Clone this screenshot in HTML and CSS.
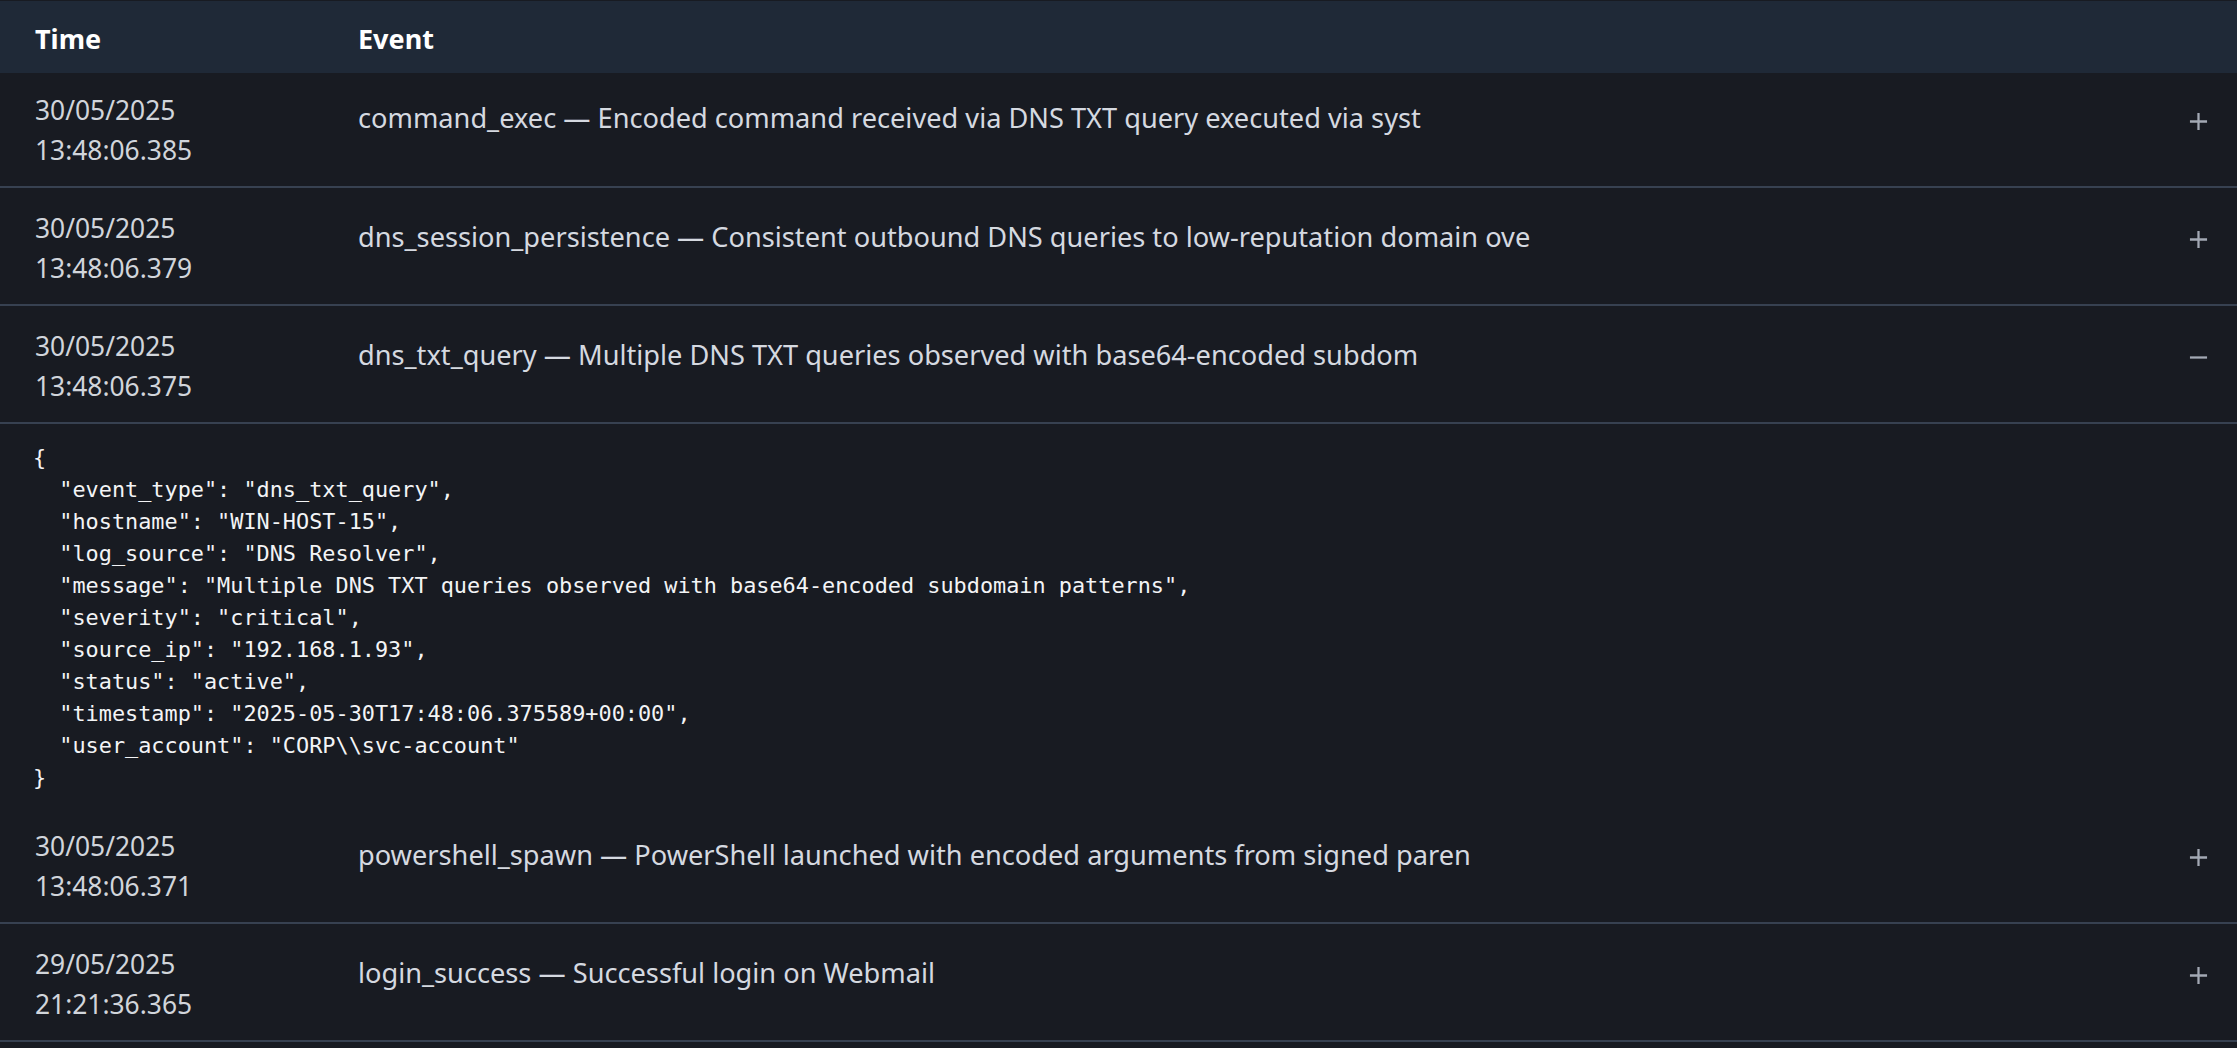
FILE: index.html
```html
<!DOCTYPE html>
<html lang="en">
<head>
<meta charset="utf-8">
<title>Events</title>
<link rel="stylesheet" href="styles.css">
</head>
<body>
<div class="log-table">
  <div class="log-head">
    <div class="col-time">Time</div>
    <div class="col-event">Event</div>
    <div class="col-toggle"></div>
  </div>

  <div class="log-row first">
    <div class="col-time"><span class="date">30/05/2025</span><span class="clock">13:48:06.385</span></div>
    <div class="col-event">command_exec — Encoded command received via DNS TXT query executed via syst</div>
    <div class="col-toggle"><svg class="toggle" viewBox="0 0 20 20"><path d="M10 1v18M1 10h18"/></svg></div>
  </div>

  <div class="log-row">
    <div class="col-time"><span class="date">30/05/2025</span><span class="clock">13:48:06.379</span></div>
    <div class="col-event">dns_session_persistence — Consistent outbound DNS queries to low-reputation domain ove</div>
    <div class="col-toggle"><svg class="toggle" viewBox="0 0 20 20"><path d="M10 1v18M1 10h18"/></svg></div>
  </div>

  <div class="log-row open">
    <div class="col-time"><span class="date">30/05/2025</span><span class="clock">13:48:06.375</span></div>
    <div class="col-event">dns_txt_query — Multiple DNS TXT queries observed with base64-encoded subdom</div>
    <div class="col-toggle"><svg class="toggle" viewBox="0 0 20 20"><path d="M1 10h18"/></svg></div>
  </div>
  <pre class="log-detail">{
  "event_type": "dns_txt_query",
  "hostname": "WIN-HOST-15",
  "log_source": "DNS Resolver",
  "message": "Multiple DNS TXT queries observed with base64-encoded subdomain patterns",
  "severity": "critical",
  "source_ip": "192.168.1.93",
  "status": "active",
  "timestamp": "2025-05-30T17:48:06.375589+00:00",
  "user_account": "CORP\\svc-account"
}</pre>

  <div class="log-row">
    <div class="col-time"><span class="date">30/05/2025</span><span class="clock">13:48:06.371</span></div>
    <div class="col-event">powershell_spawn — PowerShell launched with encoded arguments from signed paren</div>
    <div class="col-toggle"><svg class="toggle" viewBox="0 0 20 20"><path d="M10 1v18M1 10h18"/></svg></div>
  </div>

  <div class="log-row">
    <div class="col-time"><span class="date">29/05/2025</span><span class="clock">21:21:36.365</span></div>
    <div class="col-event">login_success — Successful login on Webmail</div>
    <div class="col-toggle"><svg class="toggle" viewBox="0 0 20 20"><path d="M10 1v18M1 10h18"/></svg></div>
  </div>
</div>
</body>
</html>
```

FILE: styles.css
```css
html, body {
  margin: 0;
  padding: 0;
  background: #181b22;
}

body {
  font-family: "Noto Sans", "Open Sans", sans-serif;
  color: #d1d5db;
}

.log-table {
  padding-top: 1px;
}

.log-head,
.log-row {
  display: grid;
  grid-template-columns: 323px 1fr 48px;
  align-items: start;
}

.log-head {
  background: #1f2937;
  height: 72px;
  align-items: center;
  color: #ffffff;
  font-weight: 700;
  font-size: 27px;
}

.log-head .col-time,
.log-head .col-event {
  padding: 2px 0 0 35px;
}

.log-row {
  border-bottom: 2px solid #374151;
  line-height: 40px;
  padding-bottom: 16px;
}

.log-row .col-time {
  padding: 20px 0 0 35px;
  display: flex;
  flex-direction: column;
  font-size: 26.4px;
  color: #d1d5db;
}

.log-row .col-event {
  padding: 29px 0 0 35px;
  font-size: 27.2px;
  color: #d5d9e0;
  white-space: nowrap;
  overflow: hidden;
}

.log-row .col-toggle {
  padding: 42px 29px 0 0;
  display: flex;
  justify-content: flex-end;
}

.log-row.first .col-time { padding-top: 17px; }
.log-row.first .col-event { padding-top: 25px; }
.log-row.first .col-toggle { padding-top: 39px; }

.toggle {
  width: 19px;
  height: 19px;
  display: block;
}

.toggle path {
  stroke: #a3a9b4;
  stroke-width: 2.4;
  fill: none;
}

.log-detail {
  margin: 0;
  padding: 18px 35px 12px 33px;
  font-family: "DejaVu Sans Mono", "Liberation Mono", monospace;
  font-size: 21.85px;
  line-height: 32px;
  color: #f3f4f6;
}
```
